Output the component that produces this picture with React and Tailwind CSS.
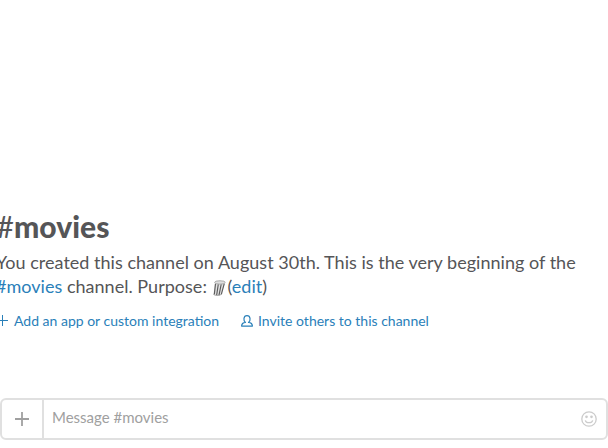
function TrashIcon() {
  return (
    <svg className="mr-[2px] inline-block h-[16px] w-[14px] align-[-3px]" viewBox="0 0 12 15" preserveAspectRatio="none" fill="none">
      <path d="M2.500 3 1.200 13.500c1.800 1.400 5 1.400 6.800 0l3-10.500Z" fill="#e4e4e4" />
      <path d="M3 3.500 2 13.500M5.400 4 4 14.200M7.900 4 6 14.200M10.500 3.500 8 13.500" stroke="#5c5c5c" strokeWidth="1" />
      <path d="M1.200 13.500c1.800 1.400 5 1.400 6.800 0" stroke="#8a8a8a" strokeWidth=".6" />
      <ellipse cx="6.800" cy="2.300" rx="4.600" ry="1.600" fill="#dedede" stroke="#999999" strokeWidth=".7" />
    </svg>
  );
}

function PersonIcon() {
  return (
    <svg className="h-[12px] w-[12px]" viewBox="0 0 12 12" fill="none" stroke="#2a80b9" strokeWidth="1.200" strokeLinejoin="round">
      <path d="M4.500 7.400C2.100 6 2.300.7 6 .7S9.900 6 7.500 7.400C9.800 7.700 11.400 8.800 11.400 11.100H.6C.6 8.800 2.200 7.700 4.500 7.400Z" />
    </svg>
  );
}

export default function App() {
  return (
    <div className="flex h-[448px] w-[608px] flex-col overflow-hidden bg-white font-['Lato',sans-serif] text-[#555557]">
      <main className="-ml-[4px] flex h-[398px] flex-col pt-[208px]">
        <h1 className="ml-[0.5px] h-[42px] text-[30px] leading-[36px] font-black tracking-[0.05px]">
          <span className="font-normal">#</span>movies
        </h1>
        <p className="w-[600px] text-[18px] leading-[24px] tracking-[0.02px]">
          You created this channel on August 30th. This is the very beginning of the{" "}
          <a className="text-[#2a80b9]">#movies</a> channel. Purpose: <TrashIcon />(<a className="text-[#2a80b9]">edit</a>)
        </p>
        <div className="mt-[13px] ml-px flex h-[20px] items-center text-[14px] leading-[20px] text-[#2a80b9]">
          <a className="flex items-center gap-[6px]">
            <svg className="-mt-[2px] h-[11px] w-[11px]" viewBox="0 0 11 11" stroke="currentColor" strokeWidth="1">
              <path d="M5.500 0v11M0 5.500h11" />
            </svg>
            Add an app or custom integration
          </a>
          <a className="ml-[22px] flex items-center gap-[5px]">
            <PersonIcon />
            Invite others to this channel
          </a>
        </div>
      </main>
      <footer className="flex h-[42px] items-stretch rounded-[6px] border-2 border-[#e0e0e0]">
        <div className="flex w-[42px] items-center justify-center border-r-2 border-[#e0e0e0]">
          <svg className="h-[14px] w-[14px]" viewBox="0 0 14 14" stroke="#a0a0a0" strokeWidth="1.800">
            <path d="M7 0v14M0 7h14" />
          </svg>
        </div>
        <div className="flex flex-1 items-center pb-[4px] pl-[8px] text-[15px] text-[#a0a0a0]">Message #movies</div>
        <svg className="mr-[9px] h-[16px] w-[16px] self-center" viewBox="0 0 16 16" fill="none" stroke="#cccccc" strokeWidth="1.300">
          <circle cx="8" cy="8" r="7.200" />
          <path d="M4.300 9.300c.8 3.200 6.600 3.200 7.400 0" />
          <circle cx="5.500" cy="5.800" r=".7" fill="#cccccc" />
          <circle cx="10.500" cy="5.800" r=".7" fill="#cccccc" />
        </svg>
      </footer>
    </div>
  );
}
